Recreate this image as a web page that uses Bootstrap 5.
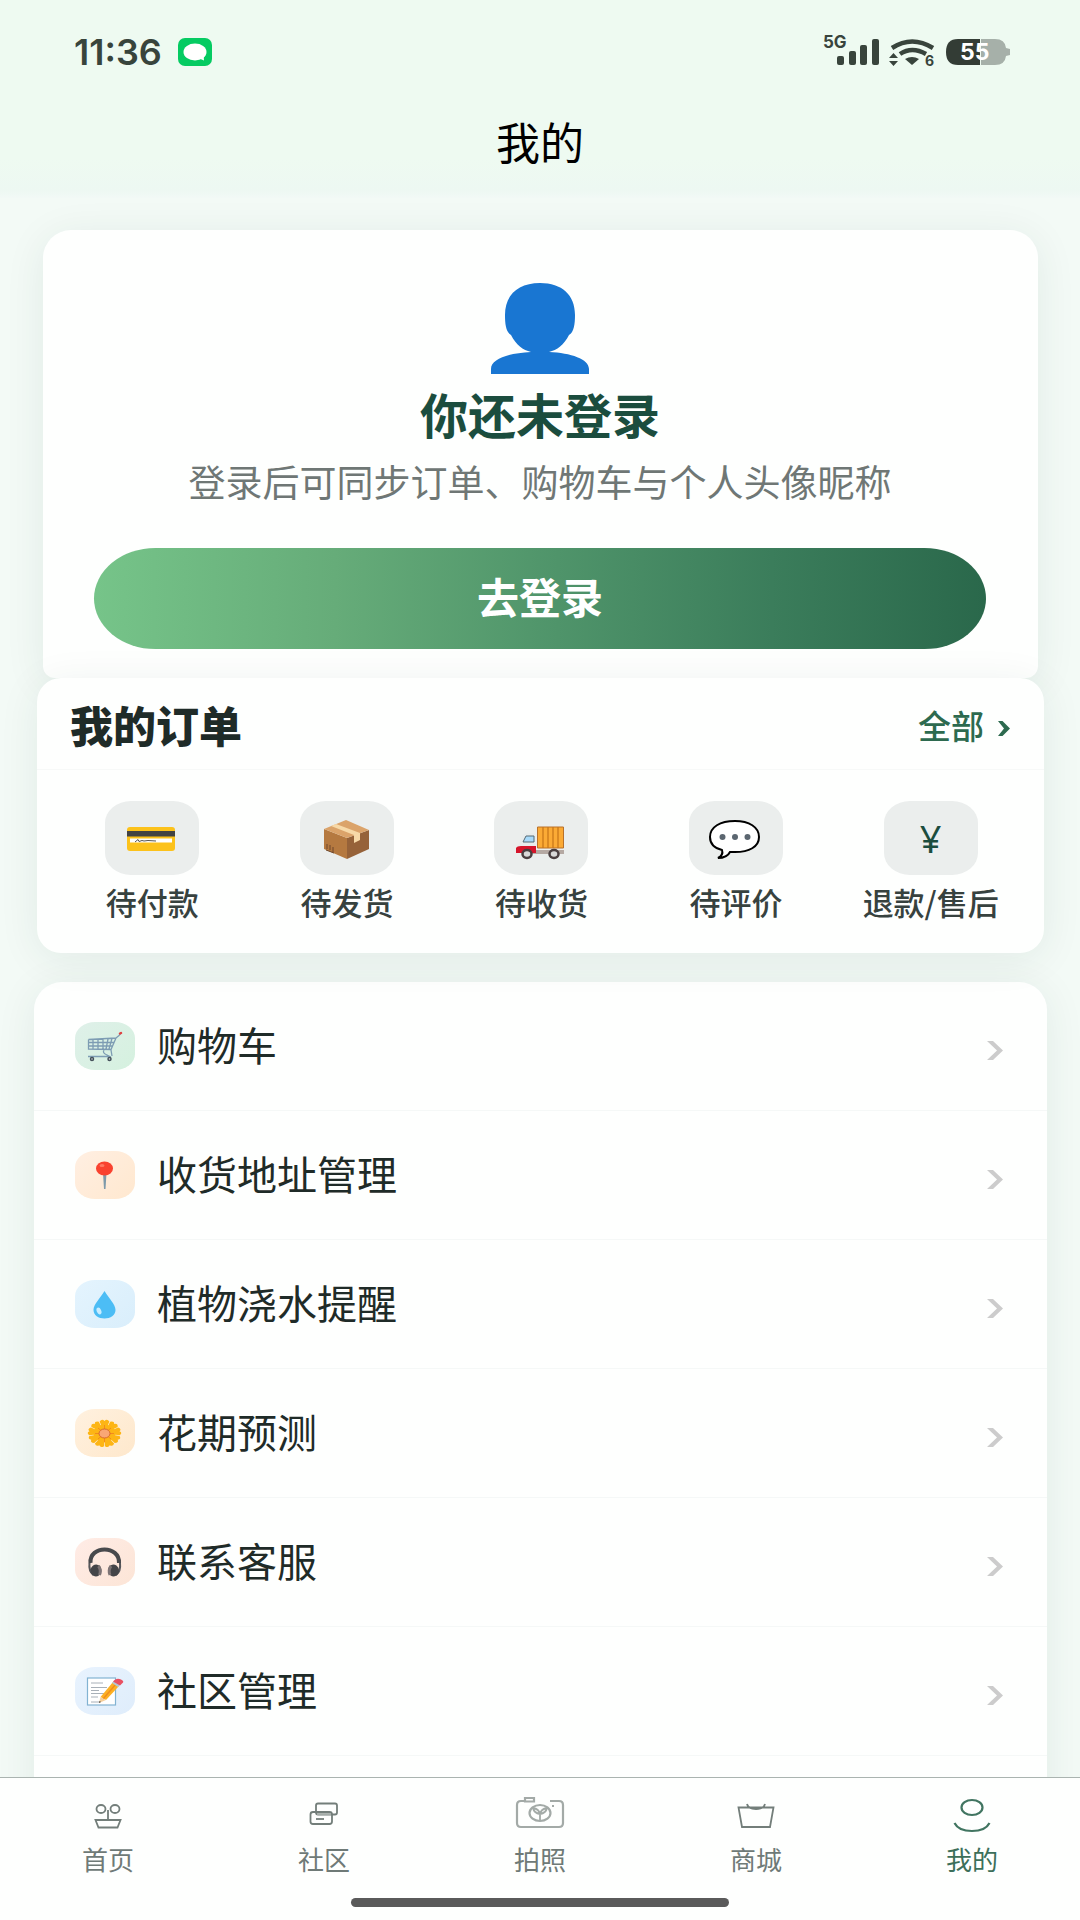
<!DOCTYPE html>
<html lang="zh-CN">
<head>
<meta charset="utf-8">
<meta name="viewport" content="width=device-width, initial-scale=1">
<title>我的</title>
<link href="https://cdn.jsdelivr.net/npm/bootstrap@5.3.0/dist/css/bootstrap.min.css" rel="stylesheet">
<style>
body{font-family:"Noto Sans CJK SC","Noto Sans",sans-serif;background:#f3faf6;color:#1f2b28;line-height:1.5}
svg{display:block;overflow:visible}
.topbar{background:linear-gradient(#eefaf1 80%,#edf8f2 96%,#f2f9f6);height:198px}
.statusbar{height:104px;padding:0 70px 0 74px;color:#38443c;font-family:Inter,sans-serif}
.clock{font-size:36px;font-weight:600;line-height:40px}
.page-name{font-size:44px;line-height:74px;color:#000;font-weight:400}
.panel{background:#fefffe;border:0;box-shadow:0 6px 40px rgba(30,60,50,.08)}
.login-panel{margin:32px 42px 0 43px;padding:53px 52px 29px 51px;border-radius:28px 28px 12px 12px}
.login-title{font-size:48px;line-height:56px;font-weight:700;color:#1b4d3e;margin-top:11px}
.login-note{font-size:37px;line-height:48px;color:#6f7775;margin-top:16px}
.login-btn{height:101px;margin-top:43px;padding:0 0 6px;border:0;border-radius:62px/51px;color:#fff;font-size:42px;font-weight:700;line-height:1;background:linear-gradient(90deg,#76c489,#66ac79 27%,#4f946a 52%,#3b7d5b 76%,#2a684b)}
.orders{margin:0 36px 0 37px;border-radius:24px;position:relative;height:275px}
.orders-head{height:92px;padding:0 34px 0 33px;border-bottom:1px solid #f7f9f8}
.orders-title{font-size:43px;line-height:56px;font-weight:900}
.orders-all{font-size:33px;font-weight:500;color:#2d6a4f;gap:14px;padding-top:4px}
.orders-all svg{margin-top:6px}
.orders-row{padding:31px 16px 0 18px}
.order-link{color:#37423f;font-size:31px;font-weight:500;line-height:40px;flex:1 1 0;white-space:nowrap}
.order-tile{width:94px;height:74px;border-radius:26px/22px;background:#ebeeed;margin-bottom:7px}
.yen{color:#1b4d3e;font-family:"Noto Sans",sans-serif;font-size:38px;font-weight:400;line-height:1}
.menu{margin:29px 33px 0 34px;border-radius:28px 28px 0 0;padding-bottom:60px}
.menu-link{height:129px;padding:0 44px 0 41px;border:0;border-bottom:1px solid #f5f8f7;background:none;font-size:40px;color:#1f2b28;gap:22px}
.menu-name{padding-bottom:5px}
.menu-link>svg{margin-top:8px}
.menu-tile{width:60px;height:48px;border-radius:20px/16px}
.t-green{background:linear-gradient(135deg,#dff0e9,#d5f1df)}
.t-orange{background:linear-gradient(135deg,#ffefe2,#ffe8cf)}
.t-blue{background:linear-gradient(135deg,#e4f4fe,#d9eefb)}
.t-amber{background:linear-gradient(135deg,#fff1df,#fee8cc)}
.t-pink{background:linear-gradient(135deg,#ffece6,#fce5d6)}
.t-sky{background:linear-gradient(135deg,#e8f3fe,#dfedfb)}
.tabs{border-top:1px solid #aab4b0;background:#fefffe;height:143px}
.tab-link{color:#6f7a77;font-size:26px;line-height:36px;flex:1 1 0;padding-top:16px}
.tab-link svg{margin-bottom:9px}
.tab-link.active{color:#3c6f5a}
.homebar{width:378px;height:9px;border-radius:5px;background:#5a5a5a;margin-bottom:13px}
</style>
</head>
<body class="d-flex flex-column vh-100 overflow-hidden">
<header class="topbar flex-shrink-0">
  <div class="statusbar d-flex align-items-center justify-content-between">
    <div class="d-flex align-items-center gap-3">
      <span class="clock">11:36</span>
      <svg width="34" height="28" viewBox="0 0 34 28"><rect width="34" height="28" rx="7" fill="#05cb62"/><ellipse cx="17" cy="14" rx="11.500" ry="8.500" fill="#fff"/><path d="M20 20l6 2.500-.5-6z" fill="#fff"/></svg>
    </div>
    <svg width="187" height="34" viewBox="0 0 187 34" fill="#38443c" font-family="Inter, sans-serif">
      <text x="0" y="13" font-size="17" font-weight="700">5G</text>
      <rect x="14" y="21" width="7" height="9" rx="2"/><rect x="26" y="16" width="7" height="14" rx="2"/><rect x="37" y="10" width="7" height="20" rx="2"/><rect x="49" y="4" width="7" height="26" rx="2"/>
      <g fill="none" stroke="#38443c" stroke-width="4.500"><path d="M69 13q20-13 41 0"/><path d="M77 19q12-8 26 0"/></g>
      <path d="M82 24q7-4 14 0l-7 6z"/><path d="M66 23l4.500-5 4.500 5zM66 26h9l-4.500 5z"/>
      <text x="102" y="31" font-size="14" font-weight="700">6</text>
      <path d="M158 4h14q10 0 11 9l4 1v6l-4 1q-1 9-11 9h-14z" fill="#a6b0a9"/><path d="M157 4h-22q-12 0-12 13t12 13h22z" fill="#333c35"/>
      <text x="137" y="25" font-size="23" font-weight="700" fill="#fff">55</text>
    </svg>
  </div>
  <h1 class="page-name text-center m-0">我的</h1>
</header>

<main class="flex-fill overflow-hidden">
  <section class="panel login-panel d-flex flex-column align-items-center">
    <svg width="98" height="91" viewBox="0 0 98 91" fill="#1976d2"><path d="M49 0C27 0 14 12 14 32c0 9 1 17 6 20 5 10 12 15 20 17C18 70 0 76 0 86v5h98v-5c0-10-18-16-40-17 8-2 15-7 20-17 5-3 6-11 6-20C84 12 71 0 49 0z"/></svg>
    <h2 class="login-title mb-0">你还未登录</h2>
    <p class="login-note mb-0 text-nowrap">登录后可同步订单、购物车与个人头像昵称</p>
    <button type="button" class="login-btn w-100">去登录</button>
  </section>

  <section class="panel orders">
    <div class="orders-head d-flex align-items-center justify-content-between">
      <h2 class="orders-title m-0">我的订单</h2>
      <a href="#" class="orders-all d-flex align-items-center text-decoration-none">全部
        <svg width="12" height="15" viewBox="0 0 12 15"><path d="M0 0h4.500L12 7.500 4.500 15H0l6-7.500z" fill="#2d6a4f"/></svg></a>
    </div>
    <div class="orders-row d-flex">
      <a href="#" class="order-link d-flex flex-column align-items-center text-decoration-none">
        <span class="order-tile"><svg width="94" height="74" viewBox="0 0 94 74"><rect x="22" y="26" width="48" height="24" rx="3" fill="#fcc21b"/><path d="M22 30h48v5.500H22z" fill="#424242"/><path d="M25 37.500h42v4H25z" fill="#fff"/><path d="M30 41l3-2.500 1 2 3-1 2 .500 4-.500 8 .500" fill="none" stroke="#555"/></svg></span>待付款</a>
      <a href="#" class="order-link d-flex flex-column align-items-center text-decoration-none">
        <span class="order-tile"><svg width="94" height="74" viewBox="0 0 94 74"><path d="M24 28l23 9v21L24 48z" fill="#b57940"/><path d="M47 37l22-8v19L47 58z" fill="#966239"/><path d="M24 28l22-9 23 10-22 8z" fill="#dba36a"/><path d="M31 25l5-2 24 9v7l-6 3v-8z" fill="#f7d9a8"/><path d="M27 43v5m3-4v5m3-3v5m-7-2l8 3" stroke="#6e472b" fill="none"/></svg></span>待发货</a>
      <a href="#" class="order-link d-flex flex-column align-items-center text-decoration-none">
        <span class="order-tile"><svg width="94" height="74" viewBox="0 0 94 74"><path d="M36 49h34v4H36z" fill="#b5a9a3"/><path d="M43.500 26h26v21h-26z" fill="#fbaa35" stroke="#b9712a"/><path d="M49 26v21m5-21v21m5-21v21m5-21v21" stroke="#c9781a" stroke-width="1.300"/><path d="M23 47l6-13q1-2 3-2h9v20H23z" fill="#e8ecec"/><path d="M29 41l3-6h8v6z" fill="#a8dafa" stroke="#576a75"/><path d="M22 47q1-2 5-2h15v7H22z" fill="#d5152b"/><g fill="#d8d8d8" stroke="#493e40" stroke-width="2.500"><ellipse cx="33" cy="53" rx="4.500" ry="4"/><ellipse cx="60" cy="53" rx="4.500" ry="4"/></g></svg></span>待收货</a>
      <a href="#" class="order-link d-flex flex-column align-items-center text-decoration-none">
        <span class="order-tile"><svg width="94" height="74" viewBox="0 0 94 74"><path d="M46 20c14 0 24 6 24 16s-10 15-24 15h-5c-2 4-7 6-12 6 4-2 5-5 4-8-8-2-12-7-12-13 0-10 10-16 25-16z" fill="#fff" stroke="#000" stroke-width="2"/><g fill="#5b6670"><circle cx="33.500" cy="36" r="3"/><circle cx="46" cy="36" r="3"/><circle cx="58.500" cy="36" r="3"/></g></svg></span>待评价</a>
      <a href="#" class="order-link d-flex flex-column align-items-center text-decoration-none">
        <span class="order-tile d-flex align-items-center justify-content-center"><span class="yen">¥</span></span>退款/售后</a>
    </div>
  </section>

  <nav class="panel menu" aria-label="功能">
    <a href="#" class="menu-link d-flex align-items-center text-decoration-none"><span class="menu-tile t-green"><svg width="60" height="48" viewBox="0 0 60 48"><g fill="none" stroke="#7d9cb3" stroke-width="1.300"><path d="M13.500 17.500L41 16q4-3 5-5M13.500 17.500V27L36 27.500 41 16M13.500 20.500h25.500M13.500 24h24M18 17.500V27M23 17.500V27M28 17v10M33 17l-2 10M37 16.500L34 27M29 28q-2 3 3 5l4 2M36 28l1 6M13 34.500h22"/></g><path d="M45 11.500l1-.500" stroke="#e0403f" stroke-width="2.500" stroke-linecap="round"/><g fill="#ddd" stroke="#45525b" stroke-width="1.500"><circle cx="17" cy="37" r="1.500"/><circle cx="34.500" cy="37" r="1.500"/></g></svg></span><span class="menu-name flex-fill">购物车</span><svg width="16" height="19" viewBox="0 0 16 19"><path d="M0 0h6l10 9.500L6 19H0l10-9.500z" fill="#ccc"/></svg></a>
    <a href="#" class="menu-link d-flex align-items-center text-decoration-none"><span class="menu-tile t-orange"><svg width="60" height="48" viewBox="0 0 60 48"><path d="M28 22h3.500l-1 16h-1.500z" fill="#7e9aaa"/><ellipse cx="29.500" cy="17.500" rx="8.500" ry="7" fill="#f9422f"/><ellipse cx="27" cy="14.500" rx="2.500" ry="1.500" fill="#ff7963"/></svg></span><span class="menu-name flex-fill">收货地址管理</span><svg width="16" height="19" viewBox="0 0 16 19"><path d="M0 0h6l10 9.500L6 19H0l10-9.500z" fill="#ccc"/></svg></a>
    <a href="#" class="menu-link d-flex align-items-center text-decoration-none"><span class="menu-tile t-blue"><svg width="60" height="48" viewBox="0 0 60 48"><path d="M29.500 11c4 7 11 13 11 19 0 5-5 8.500-11 8.500s-11-3.500-11-8.500c0-6 7-12 11-19z" fill="#4cbdf5"/><ellipse cx="24" cy="31" rx="2.200" ry="3.500" fill="#c9edff" transform="rotate(-25 24 31)"/></svg></span><span class="menu-name flex-fill">植物浇水提醒</span><svg width="16" height="19" viewBox="0 0 16 19"><path d="M0 0h6l10 9.500L6 19H0l10-9.500z" fill="#ccc"/></svg></a>
    <a href="#" class="menu-link d-flex align-items-center text-decoration-none"><span class="menu-tile t-amber"><svg width="60" height="48" viewBox="0 0 60 48"><g transform="translate(29.500 24.500) scale(1.220 1)" fill="#fdb515"><path id="petals" d="M0 0L-4-12Q-2-15 0-12.500 2-15 4-12z"/><use href="#petals" transform="rotate(40)"/><use href="#petals" transform="rotate(80)"/><use href="#petals" transform="rotate(120)"/><use href="#petals" transform="rotate(160)"/><use href="#petals" transform="rotate(200)"/><use href="#petals" transform="rotate(240)"/><use href="#petals" transform="rotate(280)"/><use href="#petals" transform="rotate(320)"/><circle r="9"/></g><path d="M29.500 16v17M20 24.500h19M23 19l13 11M36 19L23 30" stroke="#f28a1d"/><ellipse cx="29.500" cy="24.500" rx="5.500" ry="4.500" fill="#f9a775" stroke="#d96b2c"/></svg></span><span class="menu-name flex-fill">花期预测</span><svg width="16" height="19" viewBox="0 0 16 19"><path d="M0 0h6l10 9.500L6 19H0l10-9.500z" fill="#ccc"/></svg></a>
    <a href="#" class="menu-link d-flex align-items-center text-decoration-none"><span class="menu-tile t-pink"><svg width="60" height="48" viewBox="0 0 60 48"><path d="M15.500 25C14 7 45 7 44 25" fill="none" stroke="#484a4d" stroke-width="4"/><path d="M14.500 25q-1 8 4 12M45 25q1 8-4 12" fill="none" stroke="#55565a" stroke-width="2"/><ellipse cx="21" cy="32.500" rx="5.500" ry="6" fill="#444548" transform="rotate(12 21 32.500)"/><ellipse cx="38.500" cy="32.500" rx="5.500" ry="6" fill="#444548" transform="rotate(-12 38.500 32.500)"/><path d="M23.500 28q3 4 1 9M36 28q-3 4-1 9" fill="none" stroke="#7d7475" stroke-width="3"/></svg></span><span class="menu-name flex-fill">联系客服</span><svg width="16" height="19" viewBox="0 0 16 19"><path d="M0 0h6l10 9.500L6 19H0l10-9.500z" fill="#ccc"/></svg></a>
    <a href="#" class="menu-link d-flex align-items-center text-decoration-none"><span class="menu-tile t-sky"><svg width="60" height="48" viewBox="0 0 60 48"><rect x="12.500" y="11" width="28" height="27" fill="#fff" stroke="#82b3d2" stroke-width="1.200"/><path d="M16 16h12M16 20.500h16M16 23.500h8M16 26.500h14M16 30h7M16 35h8" stroke="#a8b0b8"/><path d="M25.500 30L38 15l6 4-13 14z" fill="#fdb022"/><path d="M28 32L41 17" stroke="#ef8d1c" stroke-width="1.500"/><path d="M37 16l3-3 6 4-3 3z" fill="#b3c6d1"/><path d="M39 13.500q3-3 7-1t1 4l-2 2-7-4z" fill="#e95062"/><path d="M25.500 30l-1.500 6 7-3z" fill="#f5cf9b"/><path d="M24.500 34l-.5 2 2-1z" fill="#333"/></svg></span><span class="menu-name flex-fill">社区管理</span><svg width="16" height="19" viewBox="0 0 16 19"><path d="M0 0h6l10 9.500L6 19H0l10-9.500z" fill="#ccc"/></svg></a>
  </nav>
</main>

<footer class="tabs flex-shrink-0 d-flex flex-column justify-content-between align-items-center">
  <nav class="d-flex w-100" aria-label="主导航">
    <a href="#" class="tab-link d-flex flex-column align-items-center text-decoration-none"><svg width="48" height="38" viewBox="0 0 48 38" fill="none" stroke="#737e7a" stroke-width="1.800"><ellipse cx="17" cy="15" rx="4.500" ry="4"/><ellipse cx="31" cy="15" rx="4.500" ry="4"/><path d="M24 16v10M11.500 26h25l-3 7.500h-19z"/></svg>首页</a>
    <a href="#" class="tab-link d-flex flex-column align-items-center text-decoration-none"><svg width="48" height="38" viewBox="0 0 48 38" fill="none" stroke="#737e7a" stroke-width="1.800"><rect x="16" y="9.500" width="21" height="11" rx="2"/><rect x="10.500" y="18" width="21.500" height="12" rx="2.500"/><path d="M17 20h14" stroke="#aab1ae"/><path d="M16 25h8"/></svg>社区</a>
    <a href="#" class="tab-link d-flex flex-column align-items-center text-decoration-none"><svg width="48" height="38" viewBox="0 0 48 38" fill="none" stroke="#a3aaa7" stroke-width="2.200"><path d="M8 7H5Q1 7 1 11v18q0 4 4 4h38q4 0 4-4V11q0-4-4-4h-9M9 4h9v3.500H9z"/><ellipse cx="24" cy="19" rx="10.500" ry="8"/><path d="M24 27v-8M17 14q6 1 7 6 1-5 7-6-1 5-7 6-6-1-7-6z" stroke-width="1.800"/><path d="M36 12h2"/></svg>拍照</a>
    <a href="#" class="tab-link d-flex flex-column align-items-center text-decoration-none"><svg width="48" height="38" viewBox="0 0 48 38" fill="none" stroke="#737e7a" stroke-width="1.800"><path d="M6.500 13.500h35L38 33H10zM15 10q1 5 9 5t9-5"/></svg>商城</a>
    <a href="#" class="tab-link active d-flex flex-column align-items-center text-decoration-none" aria-current="page"><svg width="48" height="38" viewBox="0 0 48 38" fill="none" stroke="#417561" stroke-width="2.200"><ellipse cx="24" cy="13.500" rx="10.500" ry="7.500"/><path d="M6.500 29q4 8 17.500 8t17.500-8"/></svg>我的</a>
  </nav>
  <div class="homebar"></div>
</footer>
<script src="https://cdn.jsdelivr.net/npm/bootstrap@5.3.0/dist/js/bootstrap.bundle.min.js"></script>
</body>
</html>
